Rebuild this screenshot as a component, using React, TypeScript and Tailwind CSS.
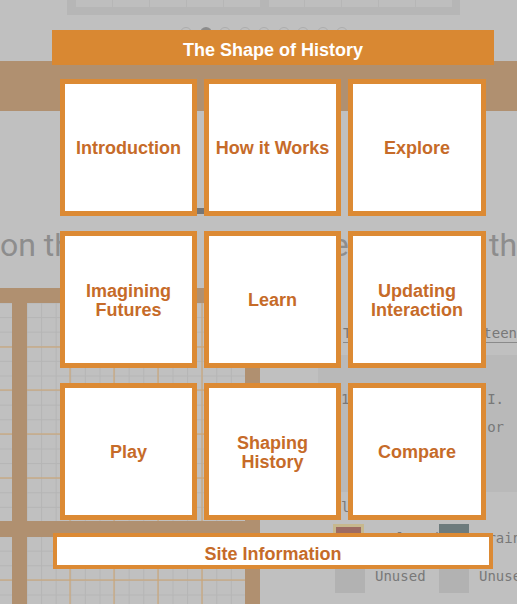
import React from "react";

const tiles: string[][] = [
  ["Introduction"],
  ["How it Works"],
  ["Explore"],
  ["Imagining", "Futures"],
  ["Learn"],
  ["Updating", "Interaction"],
  ["Play"],
  ["Shaping", "History"],
  ["Compare"],
];

function GridChart() {
  const cells: React.ReactNode[] = [];
  const step = 14.6;
  for (let i = 0; i < 20; i++) {
    const x = 27 + i * step;
    cells.push(<line key={"v" + i} x1={x} y1={0} x2={x} y2={316} stroke="#b6b6b6" strokeWidth={1} />);
  }
  for (let i = 0; i < 22; i++) {
    const y = 15 + i * step;
    cells.push(<line key={"h" + i} x1={0} y1={y} x2={260} y2={y} stroke="#b6b6b6" strokeWidth={1} />);
  }
  const major: React.ReactNode[] = [];
  [70, 114, 158, 202].forEach((x) =>
    major.push(<line key={"mv" + x} x1={x} y1={15} x2={x} y2={316} stroke="#cfa46e" strokeWidth={1} />)
  );
  [59, 102, 146, 190, 292].forEach((y) =>
    major.push(<line key={"mh" + y} x1={0} y1={y} x2={260} y2={y} stroke="#cfa46e" strokeWidth={1} />)
  );
  return (
    <svg width={260} height={316} viewBox="0 0 260 316" className="block shrink-0">
      <rect width={260} height={316} fill="#c0c0c0" />
      {cells}
      {major}
      <rect x={0} y={0} width={260} height={15} fill="#b09070" />
      <rect x={12} y={15} width={15} height={301} fill="#b09070" />
      <rect x={245} y={15} width={15} height={301} fill="#b09070" />
      <rect x={0} y={233} width={260} height={16} fill="#b09070" />
    </svg>
  );
}

export default function App() {
  return (
    <div
      className="relative w-[517px] h-[604px] overflow-hidden bg-[#c0c0c0]"
      style={{ fontFamily: '"Liberation Sans", Arial, sans-serif' }}
    >
      {/* dimmed page behind */}
      <div className="flex flex-col">
        <div className="h-[61px] flex flex-col">
          <div className="ml-[67px] w-[393px] h-[15px] bg-[#b6b6b6] pl-[9px] pr-[8px] flex gap-[9px] items-start">
            {[0, 1].map((g) => (
              <div key={g} className="flex-1 h-[7px] grid grid-cols-5 gap-px bg-[#b6b6b6]">
                {[0, 1, 2, 3, 4].map((c) => (
                  <div key={c} className="bg-[#bebebe]" />
                ))}
              </div>
            ))}
          </div>
          <div className="mt-[12px] ml-[180px] flex gap-[7.5px]">
            {Array.from({ length: 9 }).map((_, i) => (
              <div
                key={i}
                className={
                  i === 1
                    ? "w-[12px] h-[12px] rounded-full bg-[#8c8c8c]"
                    : "w-[12px] h-[12px] rounded-full border border-[#adadad]"
                }
              />
            ))}
          </div>
        </div>
        <div className="h-[50px] bg-[#b09070]" />
        <div className="h-[177px] flex flex-col">
          <div className="h-[103px] flex items-end">
            <div className="ml-[197px] w-[7px] h-[6px] bg-[#767676]" />
          </div>
          <div
            className="mt-[11px] flex items-start whitespace-nowrap text-[32px] leading-[40px] text-[#8d8d8d]"
            style={{ fontFamily: "Roboto, sans-serif" }}
          >
            <div className="w-[205px] flex justify-between pr-[1px]">
              <span>on the</span>
              <span>a</span>
            </div>
            <div className="w-[137px]" />
            <span>e</span>
            <div className="w-[118px]" />
            <span>n th</span>
          </div>
        </div>
        <div className="flex h-[316px]">
          <GridChart />
          <div
            className="flex-1 min-w-0 overflow-hidden flex flex-col text-[14px] text-[#787878]"
            style={{ fontFamily: '"DejaVu Sans Mono", monospace' }}
          >
            <div className="mt-[36px] ml-[83px] h-[19px] border-b border-[#8a8a8a] flex justify-between whitespace-nowrap leading-[18px]">
              <span>T</span>
              <span>teen</span>
            </div>
            <div className="mt-[12px] ml-[58px] h-[137px] bg-[#b9b9b9] flex flex-col pt-[30px] leading-[28px]">
              <div className="flex justify-between pl-[23px] whitespace-nowrap">
                <span>1</span>
                <span className="mr-[13px]">I.</span>
              </div>
              <div className="flex justify-end whitespace-nowrap">
                <span className="mr-[13px]">or</span>
              </div>
            </div>
            <div className="ml-[81px] mt-[6px] leading-[18px]">l</div>
            <div className="mt-[8px] ml-[73px] grid grid-cols-[106px_1fr] gap-y-[12px] whitespace-nowrap">
              <div className="flex gap-[8px]">
                <div className="w-[36px] h-[28px] border-[3px] border-[#c7b88d] bg-[#9d6b62]" />
                <span className="mt-[4px]">Explored</span>
              </div>
              <div className="flex gap-[10px]">
                <div className="w-[30px] h-[28px] bg-[#6d7b7d]" />
                <span className="mt-[4px]">Grain</span>
              </div>
              <div className="flex gap-[10px] pl-[2px]">
                <div className="w-[30px] h-[29px] bg-[#b2b2b2]" />
                <span className="mt-[2px]">Unused</span>
              </div>
              <div className="flex gap-[10px]">
                <div className="w-[30px] h-[29px] bg-[#b2b2b2]" />
                <span className="mt-[2px]">Unused</span>
              </div>
            </div>
          </div>
        </div>
      </div>

      {/* menu overlay */}
      <div className="absolute inset-0 flex flex-col items-start pl-[52px] pt-[30px]">
        <div className="w-[442px] h-[35px] bg-[#d98832] flex items-center justify-center pt-[6px] text-white font-bold text-[18px]">
          The Shape of History
        </div>
        <div className="mt-[14px] ml-[8px] grid grid-cols-[137px_137px_138px] auto-rows-[137px] gap-x-[7px] gap-y-[15px]">
          {tiles.map((lines, i) => (
            <div
              key={i}
              className="bg-white border-[5px] border-[#dc8a34] flex flex-col items-center justify-center pt-[2px] text-center text-[18px] leading-[19px] font-bold text-[#c66b29]"
            >
              {lines.map((l) => (
                <span key={l}>{l}</span>
              ))}
            </div>
          ))}
        </div>
        <div className="mt-[13px] ml-[1px] w-[440px] h-[36px] bg-white border-[4px] border-[#dc8a34] flex items-center justify-center pt-[7px] text-[18px] font-bold text-[#c66b29]">
          Site Information
        </div>
      </div>
    </div>
  );
}
